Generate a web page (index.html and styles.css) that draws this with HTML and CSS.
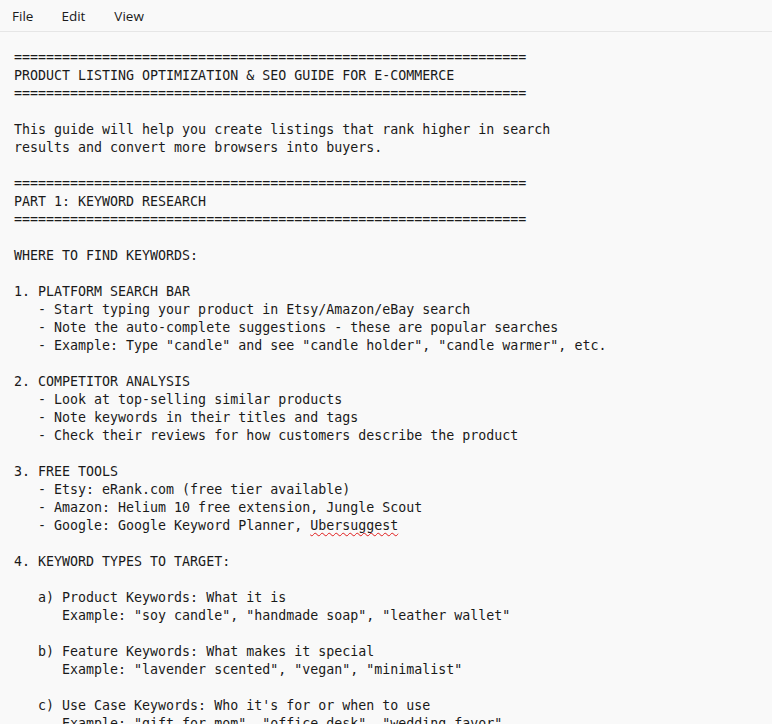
FILE: index.html
```html
<!DOCTYPE html>
<html>
<head>
<meta charset="utf-8">
<link rel="stylesheet" href="styles.css">
</head>
<body>
<div class="app">
<nav class="menubar">
<span class="menu-item">File</span>
<span class="menu-item">Edit</span>
<span class="menu-item">View</span>
</nav>
<main class="editor">
<pre class="doc">================================================================
PRODUCT LISTING OPTIMIZATION &amp; SEO GUIDE FOR E-COMMERCE
================================================================

This guide will help you create listings that rank higher in search
results and convert more browsers into buyers.

================================================================
PART 1: KEYWORD RESEARCH
================================================================

WHERE TO FIND KEYWORDS:

1. PLATFORM SEARCH BAR
   - Start typing your product in Etsy/Amazon/eBay search
   - Note the auto-complete suggestions - these are popular searches
   - Example: Type "candle" and see "candle holder", "candle warmer", etc.

2. COMPETITOR ANALYSIS
   - Look at top-selling similar products
   - Note keywords in their titles and tags
   - Check their reviews for how customers describe the product

3. FREE TOOLS
   - Etsy: eRank.com (free tier available)
   - Amazon: Helium 10 free extension, Jungle Scout
   - Google: Google Keyword Planner, <span class="spell">Ubersuggest</span>

4. KEYWORD TYPES TO TARGET:

   a) Product Keywords: What it is
      Example: "soy candle", "handmade soap", "leather wallet"

   b) Feature Keywords: What makes it special
      Example: "lavender scented", "vegan", "minimalist"

   c) Use Case Keywords: Who it's for or when to use
      Example: "gift for mom", "office desk", "wedding favor"

   d) Style Keywords: Aesthetic descriptors
      Example: "boho", "farmhouse", "modern"
</pre>
</main>
</div>
</body>
</html>
```

FILE: styles.css
```css
html, body {
  margin: 0;
  padding: 0;
  height: 100%;
  overflow: hidden;
  background: #f9f9f9;
}

.app {
  display: flex;
  flex-direction: column;
  height: 724px;
  overflow: hidden;
}

.menubar {
  display: flex;
  align-items: center;
  height: 31px;
  border-bottom: 1px solid #e6e6e6;
  padding-left: 12px;
  font-family: "Open Sans", "Noto Sans", sans-serif;
  font-size: 13.5px;
  color: #1b1b1b;
  flex: none;
}

.menu-item {
  margin-right: 28px;
}

.menu-item:nth-child(2) {
  margin-right: 29px;
}

.editor {
  flex: 1;
  overflow: hidden;
  padding: 17px 14px 0;
}

.doc {
  margin: 0;
  font-family: "DejaVu Sans Mono", "Liberation Mono", monospace;
  font-size: 13.3px;
  line-height: 18px;
  color: #1a1a1a;
  white-space: pre;
}

.spell {
  text-decoration: underline wavy #e01b1b;
  text-decoration-thickness: 1px;
  text-underline-offset: 2px;
  text-decoration-skip-ink: none;
}
```
